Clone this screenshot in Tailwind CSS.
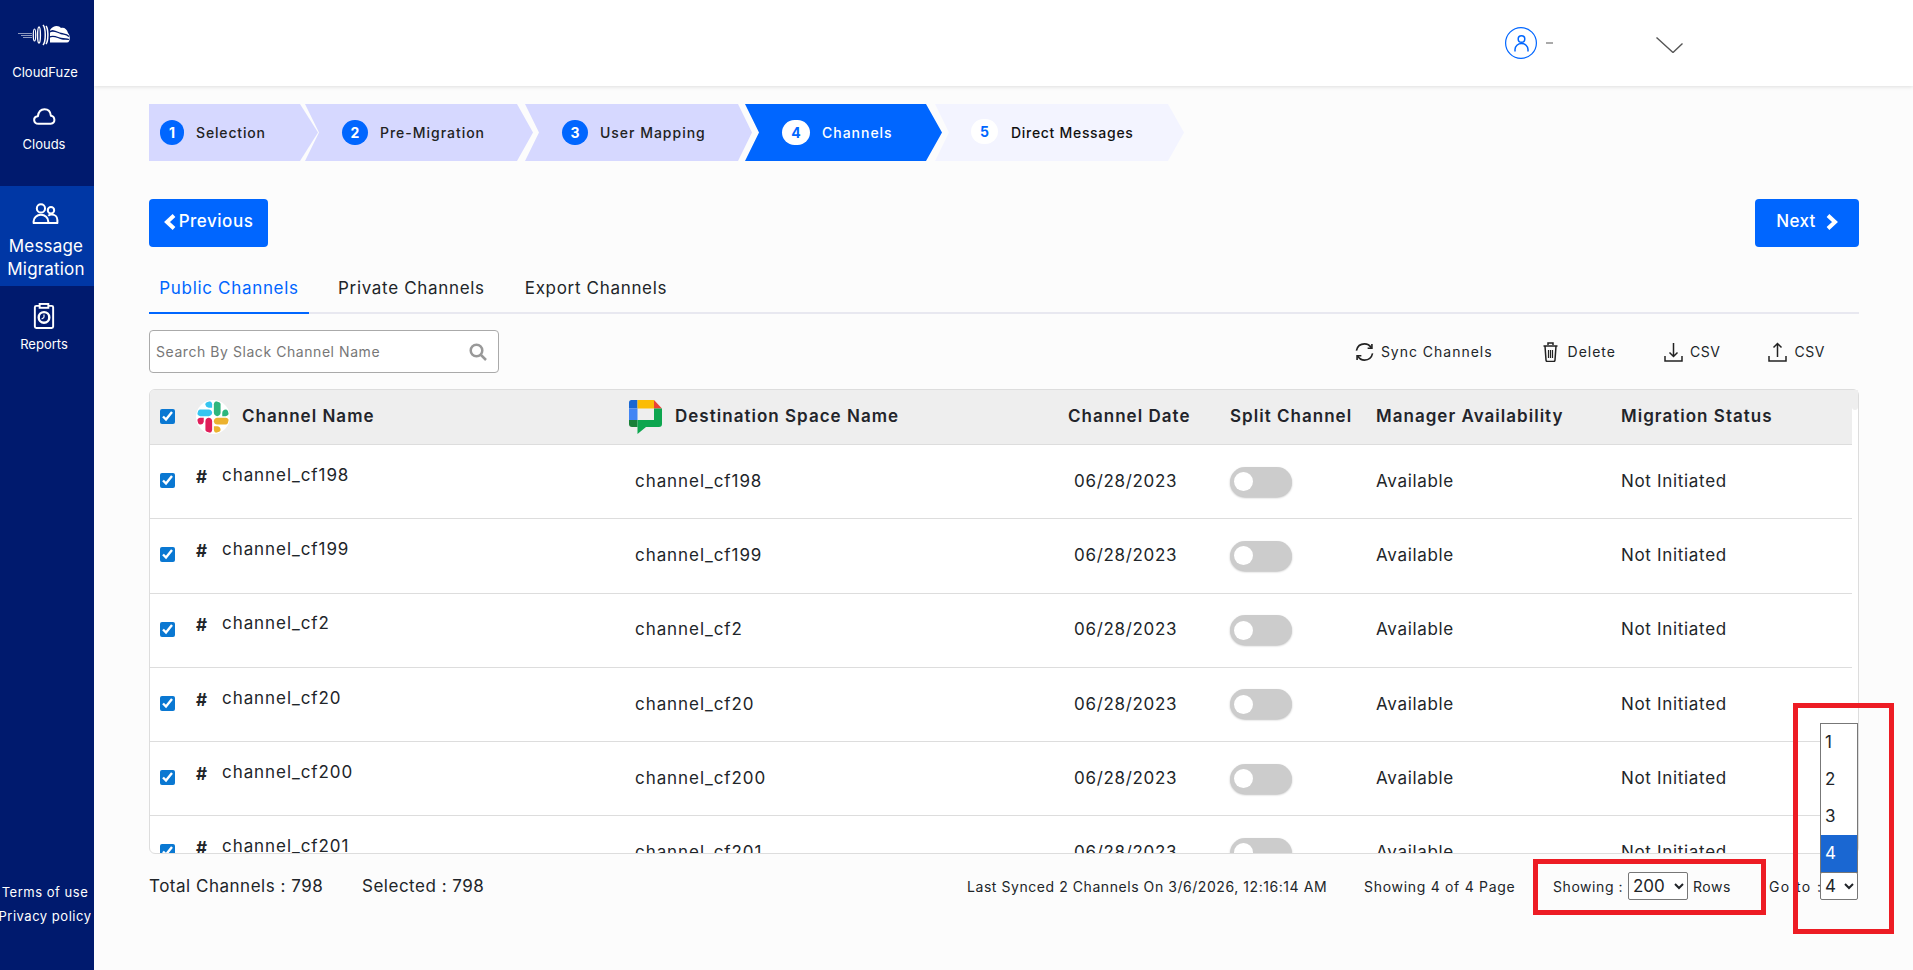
<!DOCTYPE html>
<html lang="en">
<head>
    <meta charset="UTF-8">
    <meta name="viewport" content="width=device-width, initial-scale=1.0">
    <title>Channels - CloudFuze</title>
    <script src="https://cdn.jsdelivr.net/npm/@tailwindcss/browser@4"></script>
</head>
<body class="h-screen overflow-hidden bg-[#fcfcfc] text-[#212529] [font-family:Inter,sans-serif]">
<div class="relative flex h-[970px]">
    <!-- Sidebar -->
    <aside class="flex w-[94px] shrink-0 flex-col items-center bg-[#001a6e] text-white">
        <svg class="mt-[24px] h-[22px] w-[52px] -translate-x-[3px]" viewBox="0 0 52 22" fill="none" stroke="#fff">
            <path d="M0 9.500h14M3 11.500h11M5 13.500h9" stroke-width=".7" opacity=".8"/>
            <ellipse cx="16.500" cy="11" rx="1.200" ry="6" stroke-width="1.200"/>
            <ellipse cx="21" cy="11" rx="1.400" ry="8" stroke-width="1.400"/>
            <path d="M25 1c3 3 3 17 0 20M28 2c2.500 3 2.500 15 0 18" stroke-width="1.500"/>
            <path d="M32 18.500V6C35 1 41 1 43 4c3-1 6 1 7 5 2.500 2 2.500 9.500-1 9.500z" fill="#fff" stroke="none"/>
            <path d="M31 8.500c4-4 8 0 12 1s5 0 8 3M31 13.500c4-3 8 0 12 1s5 0 8 1" stroke="#001a6e" stroke-width="1.300"/>
        </svg>
        <span class="mt-[16px] -translate-x-[2px] text-[13px] leading-[20px]">CloudFuze</span>

        <svg class="mt-[26px] h-[17px] w-[27px] -translate-x-[3px]" viewBox="0 0 28 20" fill="none" stroke="#fff" stroke-width="2.400" stroke-linejoin="round">
            <path d="M7 18.500c-6.500 0-7-8-.8-8.800C7 4 10.500 1.500 14 1.500c4 0 7 3 7.500 7.500 5 .3 6 9.500 0 9.500z"/>
        </svg>
        <span class="mt-[9px] -translate-x-[3px] text-[13px] leading-[20px]">Clouds</span>

        <div class="mt-[32px] flex h-[100px] w-full flex-col items-center bg-[#0037a5]">
            <svg class="mt-[17px] h-[21px] w-[27px] -translate-x-[2px]" viewBox="0 0 28 23" fill="none" stroke="#fff" stroke-width="2.200" stroke-linejoin="round">
                <circle cx="9" cy="6" r="4.500"/>
                <circle cx="20" cy="8" r="3.500"/>
                <path d="M1 22v-2c0-4 3.500-7 8-7s8 3 8 7v2z"/>
                <path d="M17 14c1-1 2-1.500 3.500-1.500 3.700 0 6.500 2.500 6.500 6V22h-10"/>
            </svg>
            <span class="mt-[11px] -translate-x-[1px] text-center text-[17px] leading-[23px] tracking-[0.01em]">Message Migration</span>
        </div>

        <svg class="mt-[17px] h-[26px] w-[22px] -translate-x-[3px]" viewBox="0 0 22 27" fill="none" stroke="#fff" stroke-width="2">
            <rect x="1.500" y="3" width="19" height="23" rx="1.500"/>
            <rect x="6.500" y="1" width="9" height="4" fill="#001a6e"/>
            <circle cx="11" cy="15" r="5.500" stroke-width="2.500"/>
            <path d="M11 15v-3M11 15l-2.500 1.500" stroke-width="1.200"/>
        </svg>
        <span class="mt-[5px] -translate-x-[3px] text-[13px] leading-[20px]">Reports</span>

        <div class="mt-auto mb-[44px] flex w-[94px] -translate-x-[2px] flex-col items-center gap-[4px] text-[13px] leading-[20px] tracking-[0.04em]">
            <span class="whitespace-nowrap">Terms of use</span>
            <span class="whitespace-nowrap">Privacy policy</span>
        </div>
    </aside>

    <div class="flex min-w-0 flex-1 flex-col">
        <!-- Top bar -->
        <header class="flex h-[86px] shrink-0 items-center bg-white pl-[1411px] shadow-[0_1px_4px_rgba(0,0,0,0.12)]">
            <svg class="h-[32px] w-[32px]" viewBox="0 0 32 32" fill="none" stroke="#0066ff" stroke-width="1.200">
                <circle cx="16" cy="16" r="15.400"/>
                <circle cx="16.500" cy="12" r="3.300" stroke-width="1.500"/>
                <path d="M10 24.500v-2c0-3.500 3-6 6.500-6s6.500 2.500 6.500 6v2" stroke-width="1.500"/>
            </svg>
            <span class="ml-[9px] h-[2px] w-[7px] bg-[#aaa]"></span>
            <svg class="mt-[4px] ml-[103px] h-[16px] w-[27px]" viewBox="0 0 27 16" fill="none" stroke="#555" stroke-width="1.400">
                <path d="M.5 .5 17 15.500 26.500 6.500"/>
            </svg>
        </header>

        <main class="flex flex-1 flex-col pt-[18px] pr-[54px] pl-[55px]">
            <!-- Steps -->
            <div class="flex h-[57px] text-[14px] font-medium text-[#222]">
                <div class="flex w-[169px] items-center bg-[#d6d8ff] pl-[11px] [clip-path:polygon(0_0,151px_0,169px_50%,151px_100%,0_100%)]">
                    <span class="flex h-[25px] w-[24px] items-center justify-center rounded-full bg-[#0066ff] text-[14px] font-bold text-white">1</span>
                    <span class="ml-[12px] tracking-[0.06em]">Selection</span>
                </div>
                <div class="-ml-[13px] flex w-[228px] items-center bg-[#d6d8ff] pl-[37px] [clip-path:polygon(0_0,212px_0,228px_50%,212px_100%,0_100%,14px_50%)]">
                    <span class="flex h-[25px] w-[26px] items-center justify-center rounded-full bg-[#0066ff] text-[14px] font-bold text-white">2</span>
                    <span class="ml-[12px] tracking-[0.07em]">Pre-Migration</span>
                </div>
                <div class="-ml-[8px] flex w-[227px] items-center bg-[#d6d8ff] pl-[37px] [clip-path:polygon(0_0,213px_0,227px_50%,213px_100%,0_100%,14px_50%)]">
                    <span class="flex h-[25px] w-[26px] items-center justify-center rounded-full bg-[#0066ff] text-[14px] font-bold text-white">3</span>
                    <span class="ml-[12px] tracking-[0.07em]">User Mapping</span>
                </div>
                <div class="-ml-[7px] flex w-[197px] items-center bg-[#0066ff] pl-[37px] text-white [clip-path:polygon(0_0,181px_0,197px_50%,181px_100%,0_100%,14px_50%)]">
                    <span class="flex h-[25px] w-[28px] items-center justify-center rounded-full bg-white text-[14px] font-bold text-[#0066ff]">4</span>
                    <span class="ml-[12px] tracking-[0.07em]">Channels</span>
                </div>
                <div class="-ml-[7px] flex w-[249px] items-center bg-[#f3f4ff] pl-[36px] text-[#111] [clip-path:polygon(0_0,233px_0,249px_50%,233px_100%,0_100%,14px_50%)]">
                    <span class="mb-[3px] flex h-[25px] w-[27px] items-center justify-center rounded-full bg-white text-[14px] font-bold text-[#0066ff]">5</span>
                    <span class="ml-[13px] tracking-[0.05em]">Direct Messages</span>
                </div>
            </div>

            <!-- Previous / Next -->
            <div class="mt-[38px] flex h-[48px] justify-between">
                <button class="flex w-[119px] items-center justify-center gap-[3px] rounded-[4px] bg-[#0066ff] pb-[2px] text-[17px] font-medium tracking-[0.03em] text-white">
                    <svg class="h-[16px] w-[12px]" viewBox="0 0 12 16" fill="none" stroke="#fff" stroke-width="4"><path d="M10 1.500 3 8l7 6.500"/></svg>
                    Previous
                </button>
                <button class="flex w-[104px] items-center justify-center gap-[10px] rounded-[4px] bg-[#0066ff] pb-[2px] text-[17px] font-medium tracking-[0.02em] text-white">
                    Next
                    <svg class="h-[16px] w-[12px]" viewBox="0 0 12 16" fill="none" stroke="#fff" stroke-width="4"><path d="M2 1.500 9 8l-7 6.500"/></svg>
                </button>
            </div>

            <!-- Tabs -->
            <div class="flex h-[67px] items-end border-b-2 border-[#e8e8f0] text-[17px] tracking-[0.04em]">
                <div class="-mb-[2px] flex h-[54px] w-[160px] items-center justify-center border-b-2 border-[#0066ff] pt-[5px] text-[#0066ff]">Public Channels</div>
                <div class="-mb-[2px] ml-[29px] flex h-[54px] items-center pt-[3px]">Private Channels</div>
                <div class="-mb-[2px] ml-[40px] flex h-[54px] items-center pt-[3px]">Export Channels</div>
            </div>

            <!-- Search and actions -->
            <div class="mt-[16px] flex h-[43px] items-center justify-between">
                <div class="flex h-[43px] w-[350px] items-center justify-between rounded-[4px] border border-[#aaa] bg-white pr-[11px] pl-[6px]">
                    <span class="text-[14px] tracking-[0.04em] text-[#777]">Search By Slack Channel Name</span>
                    <svg class="h-[18px] w-[18px]" viewBox="0 0 18 18" fill="none" stroke="#999" stroke-width="2.500"><circle cx="7.500" cy="7.500" r="5.800"/><path d="m12 12 5 5"/></svg>
                </div>
                <div class="flex items-center pr-[34px] text-[14px]">
                    <svg class="h-[20px] w-[19px]" viewBox="0 0 20 20" fill="none" stroke="#222" stroke-width="1.700">
                        <path d="M1.500 8.500C2.500 4 6 1.500 10 1.500c3 0 5.500 1.500 7 4M18.500 11.500c-1 4.500-4.500 7-8.500 7-3 0-5.500-1.500-7-4"/>
                        <path d="M17.800 1.500v4.500h-4.500M2.200 18.500V14h4.500"/>
                    </svg>
                    <span class="ml-[7px] tracking-[0.07em]">Sync Channels</span>
                    <svg class="ml-[50px] h-[20px] w-[15px]" viewBox="0 0 15 20" fill="none" stroke="#222" stroke-width="1.500">
                        <path d="M.5 4h14M5 3V1h5v2M2 4l1 14c0 1 .7 1.500 1.500 1.500h6c.8 0 1.500-.5 1.500-1.500l1-14"/>
                        <path d="M5.500 8v8M7.500 8v8M9.500 8v8" stroke-width="1.200"/>
                    </svg>
                    <span class="ml-[10px] tracking-[0.07em]">Delete</span>
                    <svg class="ml-[48px] h-[20px] w-[19px]" viewBox="0 0 19 20" fill="none" stroke="#222" stroke-width="1.500">
                        <path d="M9.500 1v13M5.500 10.500l4 4 4-4M1 14v5h17v-5"/>
                    </svg>
                    <span class="ml-[7px] tracking-[0.04em]">CSV</span>
                    <svg class="ml-[48px] h-[20px] w-[19px]" viewBox="0 0 19 20" fill="none" stroke="#222" stroke-width="1.500">
                        <path d="M9.500 15V1.500M5.500 5.500l4-4 4 4M1 14v5h17v-5"/>
                    </svg>
                    <span class="ml-[7px] tracking-[0.04em]">CSV</span>
                </div>
            </div>

            <!-- Channels table -->
            <div class="mt-[16px] h-[465px] overflow-hidden rounded-[6px] border border-[#ddd] bg-white">
                <div class="grid h-[55px] w-[1702px] grid-cols-[479px_439px_162px_146px_245px_231px] items-center border-b border-[#ddd] bg-[#eeeeee] pb-[1px] text-[17px] font-semibold tracking-[0.06em] text-[#22242a]">
                    <div class="flex items-center">
                        <input type="checkbox" checked class="ml-[10px] h-[15px] w-[15px] accent-[#0a78d2]">
                        <svg class="ml-[21px] h-[34px] w-[34px] rounded-full bg-white p-[1px]" viewBox="0 0 122.800 122.800">
                            <path d="M25.800 77.600c0 7.100-5.800 12.900-12.900 12.900S0 84.700 0 77.600s5.800-12.900 12.900-12.900h12.900v12.900z" fill="#E01E5A"/>
                            <path d="M32.300 77.600c0-7.100 5.800-12.900 12.900-12.900s12.900 5.800 12.900 12.900v32.300c0 7.100-5.800 12.900-12.900 12.900s-12.900-5.800-12.900-12.900V77.600z" fill="#E01E5A"/>
                            <path d="M45.200 25.800c-7.100 0-12.900-5.800-12.900-12.900S38.100 0 45.200 0s12.900 5.800 12.900 12.900v12.900H45.200z" fill="#36C5F0"/>
                            <path d="M45.200 32.300c7.100 0 12.900 5.800 12.900 12.900s-5.800 12.900-12.900 12.900H12.900C5.800 58.100 0 52.300 0 45.200s5.800-12.900 12.900-12.900h32.300z" fill="#36C5F0"/>
                            <path d="M97 45.200c0-7.100 5.800-12.900 12.900-12.900s12.900 5.800 12.900 12.900-5.800 12.900-12.900 12.900H97V45.200z" fill="#2EB67D"/>
                            <path d="M90.500 45.200c0 7.100-5.800 12.900-12.900 12.900s-12.900-5.800-12.900-12.900V12.900C64.700 5.800 70.500 0 77.600 0s12.900 5.800 12.900 12.900v32.300z" fill="#2EB67D"/>
                            <path d="M77.600 97c7.100 0 12.900 5.800 12.900 12.900s-5.800 12.900-12.900 12.900-12.900-5.800-12.900-12.900V97h12.900z" fill="#ECB22E"/>
                            <path d="M77.600 90.500c-7.100 0-12.900-5.800-12.900-12.900s5.800-12.900 12.900-12.900h32.300c7.100 0 12.900 5.800 12.900 12.900s-5.800 12.900-12.900 12.900H77.600z" fill="#ECB22E"/>
                        </svg>
                        <span class="ml-[12px]">Channel Name</span>
                    </div>
                    <div class="flex items-center">
                        <svg class="h-[34px] w-[33px]" viewBox="0 0 33 34">
                            <path d="M2.500 0H8.500V8.500H0V2.500Q0 0 2.500 0Z" fill="#1967d2"/>
                            <rect x="8.500" width="16.500" height="8.500" fill="#fbbc04"/>
                            <path d="M25 0 33 8.500H25Z" fill="#ea4335"/>
                            <rect y="8.500" width="8.500" height="11.500" fill="#4285f4"/>
                            <path d="M0 20H8.500V27H3Q0 27 0 24Z" fill="#188038"/>
                            <path d="M25 8.500H33V24Q33 27 30 27H17L8.500 34V20H25Z" fill="#0da64f"/>
                        </svg>
                        <span class="ml-[13px]">Destination Space Name</span>
                    </div>
                    <div>Channel Date</div>
                    <div>Split Channel</div>
                    <div>Manager Availability</div>
                    <div>Migration Status</div>
                </div>

                <!-- row -->
                <div class="grid h-[74.25px] w-[1702px] grid-cols-[479px_439px_162px_146px_245px_231px] items-center border-b border-[#ddd] text-[17px] tracking-[0.04em]">
                    <div class="flex items-center"><input type="checkbox" checked class="ml-[10px] h-[15px] w-[15px] -translate-y-[1px] accent-[#0a78d2]"><span class="ml-[21px] w-[26px] -translate-y-[4px] font-bold">#</span><span class="-translate-y-[6px] tracking-[0.055em]">channel_cf198</span></div>
                    <div class="pl-[6px] tracking-[0.055em]">channel_cf198</div>
                    <div class="pl-[6px]">06/28/2023</div>
                    <div class="flex h-[30px] w-[62px] items-center rounded-full bg-[#ccc] pl-[4px] shadow-[0_1px_2px_rgba(0,0,0,0.25)]"><span class="h-[19px] w-[19px] rounded-full bg-white"></span></div>
                    <div>Available</div>
                    <div>Not Initiated</div>
                </div>
                <div class="grid h-[74.25px] w-[1702px] grid-cols-[479px_439px_162px_146px_245px_231px] items-center border-b border-[#ddd] text-[17px] tracking-[0.04em]">
                    <div class="flex items-center"><input type="checkbox" checked class="ml-[10px] h-[15px] w-[15px] -translate-y-[1px] accent-[#0a78d2]"><span class="ml-[21px] w-[26px] -translate-y-[4px] font-bold">#</span><span class="-translate-y-[6px] tracking-[0.055em]">channel_cf199</span></div>
                    <div class="pl-[6px] tracking-[0.055em]">channel_cf199</div>
                    <div class="pl-[6px]">06/28/2023</div>
                    <div class="flex h-[30px] w-[62px] items-center rounded-full bg-[#ccc] pl-[4px] shadow-[0_1px_2px_rgba(0,0,0,0.25)]"><span class="h-[19px] w-[19px] rounded-full bg-white"></span></div>
                    <div>Available</div>
                    <div>Not Initiated</div>
                </div>
                <div class="grid h-[74.25px] w-[1702px] grid-cols-[479px_439px_162px_146px_245px_231px] items-center border-b border-[#ddd] text-[17px] tracking-[0.04em]">
                    <div class="flex items-center"><input type="checkbox" checked class="ml-[10px] h-[15px] w-[15px] -translate-y-[1px] accent-[#0a78d2]"><span class="ml-[21px] w-[26px] -translate-y-[4px] font-bold">#</span><span class="-translate-y-[6px] tracking-[0.055em]">channel_cf2</span></div>
                    <div class="pl-[6px] tracking-[0.055em]">channel_cf2</div>
                    <div class="pl-[6px]">06/28/2023</div>
                    <div class="flex h-[30px] w-[62px] items-center rounded-full bg-[#ccc] pl-[4px] shadow-[0_1px_2px_rgba(0,0,0,0.25)]"><span class="h-[19px] w-[19px] rounded-full bg-white"></span></div>
                    <div>Available</div>
                    <div>Not Initiated</div>
                </div>
                <div class="grid h-[74.25px] w-[1702px] grid-cols-[479px_439px_162px_146px_245px_231px] items-center border-b border-[#ddd] text-[17px] tracking-[0.04em]">
                    <div class="flex items-center"><input type="checkbox" checked class="ml-[10px] h-[15px] w-[15px] -translate-y-[1px] accent-[#0a78d2]"><span class="ml-[21px] w-[26px] -translate-y-[4px] font-bold">#</span><span class="-translate-y-[6px] tracking-[0.055em]">channel_cf20</span></div>
                    <div class="pl-[6px] tracking-[0.055em]">channel_cf20</div>
                    <div class="pl-[6px]">06/28/2023</div>
                    <div class="flex h-[30px] w-[62px] items-center rounded-full bg-[#ccc] pl-[4px] shadow-[0_1px_2px_rgba(0,0,0,0.25)]"><span class="h-[19px] w-[19px] rounded-full bg-white"></span></div>
                    <div>Available</div>
                    <div>Not Initiated</div>
                </div>
                <div class="grid h-[74.25px] w-[1702px] grid-cols-[479px_439px_162px_146px_245px_231px] items-center border-b border-[#ddd] text-[17px] tracking-[0.04em]">
                    <div class="flex items-center"><input type="checkbox" checked class="ml-[10px] h-[15px] w-[15px] -translate-y-[1px] accent-[#0a78d2]"><span class="ml-[21px] w-[26px] -translate-y-[4px] font-bold">#</span><span class="-translate-y-[6px] tracking-[0.055em]">channel_cf200</span></div>
                    <div class="pl-[6px] tracking-[0.055em]">channel_cf200</div>
                    <div class="pl-[6px]">06/28/2023</div>
                    <div class="flex h-[30px] w-[62px] items-center rounded-full bg-[#ccc] pl-[4px] shadow-[0_1px_2px_rgba(0,0,0,0.25)]"><span class="h-[19px] w-[19px] rounded-full bg-white"></span></div>
                    <div>Available</div>
                    <div>Not Initiated</div>
                </div>
                <div class="grid h-[74.25px] w-[1702px] grid-cols-[479px_439px_162px_146px_245px_231px] items-center border-b border-[#ddd] text-[17px] tracking-[0.04em]">
                    <div class="flex items-center"><input type="checkbox" checked class="ml-[10px] h-[15px] w-[15px] -translate-y-[1px] accent-[#0a78d2]"><span class="ml-[21px] w-[26px] -translate-y-[4px] font-bold">#</span><span class="-translate-y-[6px] tracking-[0.055em]">channel_cf201</span></div>
                    <div class="pl-[6px] tracking-[0.055em]">channel_cf201</div>
                    <div class="pl-[6px]">06/28/2023</div>
                    <div class="flex h-[30px] w-[62px] items-center rounded-full bg-[#ccc] pl-[4px] shadow-[0_1px_2px_rgba(0,0,0,0.25)]"><span class="h-[19px] w-[19px] rounded-full bg-white"></span></div>
                    <div>Available</div>
                    <div>Not Initiated</div>
                </div>
            </div>

            <!-- Footer -->
            <div class="mt-[18px] flex h-[28px] items-center whitespace-nowrap">
                <span class="w-[175px] translate-y-[1px] text-[17px] tracking-[0.03em]">Total Channels : 798</span>
                <span class="ml-[38px] w-[120px] translate-y-[1px] text-[17px] tracking-[0.03em]">Selected : 798</span>
                <span class="ml-[485px] w-[359px] text-[14px] tracking-[0.04em]">Last Synced 2 Channels On 3/6/2026, 12:16:14 AM</span>
                <span class="ml-[38px] w-[151px] text-[14px] tracking-[0.05em]">Showing 4 of 4 Page</span>
                <span class="ml-[38px] w-[70px] text-[14px] tracking-[0.04em]">Showing :</span>
                <select class="ml-[5px] h-[28px] w-[60px] rounded-[2px] border border-[#777] bg-white text-[17px]"><option>200</option></select>
                <span class="ml-[5px] w-[38px] text-[14px] tracking-[0.04em]">Rows</span>
                <span class="ml-[38px] w-[48px] text-[14px] tracking-[0.1em]">Go to :</span>
                <select class="ml-[3px] h-[28px] w-[38px] rounded-[2px] border border-[#777] bg-white text-[17px]"><option>4</option></select>
            </div>
        </main>
    </div>

    <!-- Top of the table's scrollbar track -->
    <div class="absolute top-[390px] left-[1852px] h-[20px] w-[6px] rounded-b-[3px] bg-[#eeeeee]"></div>

    <!-- Open page list of the Go to select -->
    <ul class="absolute top-[723px] left-[1820px] w-[38px] border border-[#777] bg-white text-[17px]">
        <li class="flex h-[37px] items-center pt-[1px] pl-[4px]">1</li>
        <li class="flex h-[37px] items-center pt-[1px] pl-[4px]">2</li>
        <li class="flex h-[37px] items-center pt-[1px] pl-[4px]">3</li>
        <li class="flex h-[37px] items-center bg-[#1a67d2] pt-[1px] pl-[4px] text-white">4</li>
    </ul>

    <!-- Red annotation boxes -->
    <div class="absolute top-[859px] left-[1533px] h-[56px] w-[233px] border-[5px] border-[#ed1c24]"></div>
    <div class="absolute top-[703px] left-[1793px] h-[231px] w-[101px] border-[5px] border-[#ed1c24]"></div>
</div>
</body>
</html>
